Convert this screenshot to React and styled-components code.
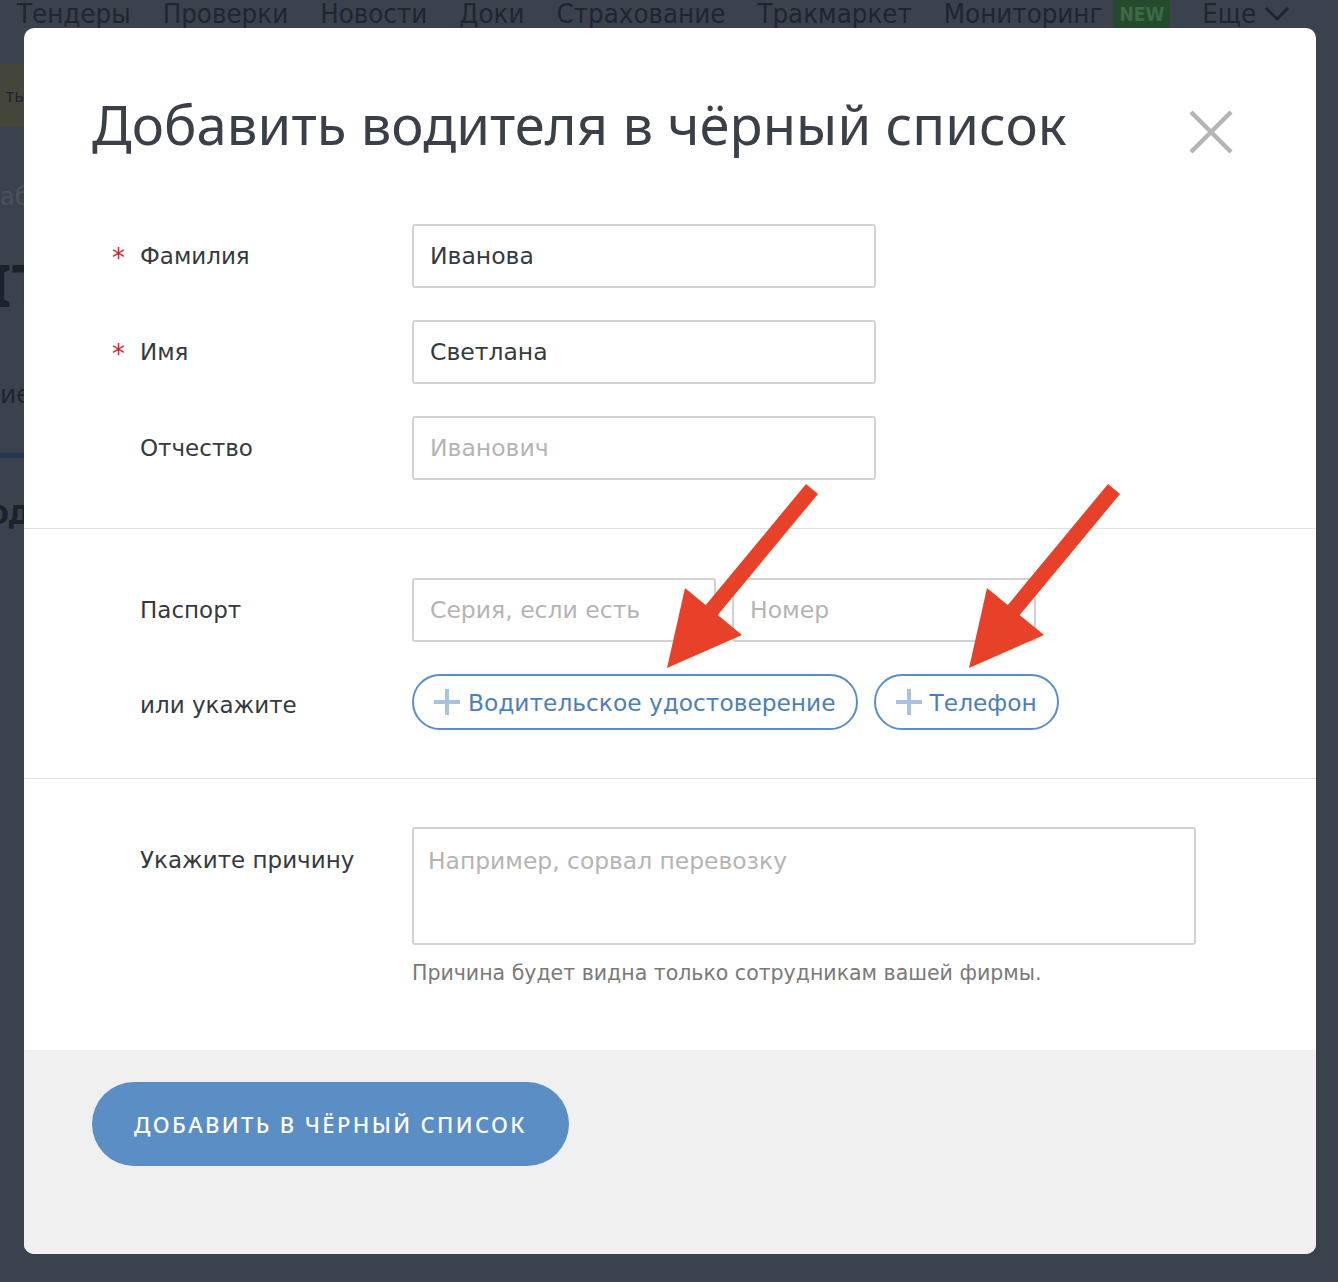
import React from 'react'
import styled, { createGlobalStyle } from 'styled-components'

const GlobalStyle = createGlobalStyle`
  html, body {
    margin: 0;
    padding: 0;
    background: #3a424d;
  }
  body {
    font-family: "DejaVu Sans", Verdana, sans-serif;
  }
  * { box-sizing: border-box; }
`

const nav = ['Тендеры', 'Проверки', 'Новости', 'Доки', 'Страхование', 'Тракмаркет', 'Мониторинг']

export default function App() {
  return (
    <Page>
      <GlobalStyle />
      <NavBar>
        {nav.map((n) => (
          <NavItem key={n}>{n}</NavItem>
        ))}
        <NewBadge>NEW</NewBadge>
        <NavItem>
          Еще
          <svg width="26" height="18" viewBox="0 0 26 18" style={{ marginLeft: 8 }}>
            <path d="M2 3 L13 14 L24 3" fill="none" stroke="#1f2630" strokeWidth="3" />
          </svg>
        </NavItem>
      </NavBar>

      <BgSide>
        <BgButton>ть</BgButton>
        <BgText $top="50px" $light>аб</BgText>
        <BgBig>IT</BgBig>
        <BgText $top="50px">ие</BgText>
        <BgLine />
        <BgBig $small>од</BgBig>
      </BgSide>

      <Overlay>
        <Modal>
          <Header>
            <Title>Добавить водителя в чёрный список</Title>
            <CloseButton aria-label="Закрыть">
              <svg width="46" height="46" viewBox="0 0 46 46">
                <path d="M3 3 L43 43 M43 3 L3 43" stroke="#b5b5b5" strokeWidth="4.5" />
              </svg>
            </CloseButton>
          </Header>

          <Section $top="70px">
            <Row>
              <Label $required>Фамилия</Label>
              <Input defaultValue="Иванова" />
            </Row>
            <Row>
              <Label $required>Имя</Label>
              <Input defaultValue="Светлана" />
            </Row>
            <Row>
              <Label>Отчество</Label>
              <Input placeholder="Иванович" />
            </Row>
          </Section>

          <Section $top="49px">
            <Row>
              <Label>Паспорт</Label>
              <Pair>
                <Input $w="304px" placeholder="Серия, если есть" />
                <Input $w="304px" placeholder="Номер" />
              </Pair>
            </Row>
            <Row>
              <Label $shift="5px">или укажите</Label>
              <Pair>
                <AddButton>
                  <Plus />
                  Водительское удостоверение
                </AddButton>
                <AddButton>
                  <Plus />
                  Телефон
                </AddButton>
              </Pair>
            </Row>
          </Section>

          <Section $top="48px" $last>
            <Row $top>
              <Label $shift="20px">Укажите причину</Label>
              <Field>
                <TextArea placeholder="Например, сорвал перевозку" />
                <Hint>Причина будет видна только сотрудникам вашей фирмы.</Hint>
              </Field>
            </Row>
          </Section>

          <Footer>
            <SubmitButton>Добавить в чёрный список</SubmitButton>
          </Footer>
        </Modal>

        <Arrows viewBox="0 0 1338 1282" width="1338" height="1282">
          <Arrow dx={0} />
          <Arrow dx={302} />
        </Arrows>
      </Overlay>
    </Page>
  )
}

function Plus() {
  return (
    <svg width="30" height="30" viewBox="0 0 30 30" style={{ marginRight: 6 }}>
      <path d="M15 2 V28 M2 15 H28" stroke="#a9c2df" strokeWidth="4" />
    </svg>
  )
}

function Arrow({ dx }) {
  return (
    <g transform={`translate(${dx} 0)`} fill="#e8412a">
      <path d="M806 484 L818 494 L712 622 L700 612 Z" />
      <path d="M667 668 L685 588 L742 635 Z" />
    </g>
  )
}

const Page = styled.div`
  position: relative;
  width: 1338px;
  height: 1282px;
  overflow: hidden;
  background: #3a424d;
`

const NavBar = styled.nav`
  display: flex;
  align-items: center;
  gap: 32px;
  height: 30px;
  padding-left: 17px;
  font-family: "DejaVu Sans Condensed", "DejaVu Sans", sans-serif;
  font-size: 27.4px;
  line-height: 30px;
  color: #1f2630;
  margin-top: -1px;
`

const NavItem = styled.span`
  display: flex;
  align-items: center;
  white-space: nowrap;
`

const NewBadge = styled.span`
  margin-left: -21px;
  padding: 0 6px;
  height: 30px;
  line-height: 30px;
  border-radius: 5px;
  background: #264a2e;
  color: #3e6b47;
  font-size: 19px;
  font-weight: bold;
`

const BgSide = styled.div`
  width: 24px;
  overflow: hidden;
  margin-top: 35px;
  display: flex;
  flex-direction: column;
  font-family: "Noto Sans", sans-serif;
`

const BgButton = styled.div`
  height: 63px;
  background: #44463c;
  color: #1f2630;
  font-size: 18px;
  line-height: 63px;
  text-align: right;
  white-space: nowrap;
`

const BgText = styled.div`
  margin-top: ${(p) => p.$top};
  color: ${(p) => (p.$light ? '#4a525d' : '#1f2630')};
  font-size: 26px;
  white-space: nowrap;
  text-align: right;
`

const BgBig = styled.div`
  margin-top: 30px;
  color: #1c222b;
  font-size: ${(p) => (p.$small ? '34px' : '60px')};
  font-weight: bold;
  white-space: nowrap;
  margin-left: -12px;
`

const BgLine = styled.div`
  margin-top: 42px;
  height: 5px;
  background: #23374f;
`

const Overlay = styled.div`
  position: absolute;
  inset: 0;
  padding: 28px 22px 28px 24px;
`

const Modal = styled.div`
  width: 1292px;
  height: 1226px;
  background: #fff;
  border-radius: 10px;
  overflow: hidden;
  display: flex;
  flex-direction: column;
`

const Header = styled.div`
  display: flex;
  align-items: flex-start;
  justify-content: space-between;
  padding: 62px 82px 0 68px;
  height: 126px;
`

const Title = styled.h1`
  margin: 4px 0 0;
  font-family: "Noto Sans", "Open Sans", sans-serif;
  font-weight: 400;
  font-size: 54.3px;
  line-height: 60px;
  color: #3b4048;
  letter-spacing: 0.1px;
`

const CloseButton = styled.button`
  border: 0;
  background: none;
  padding: 0;
  width: 46px;
  height: 46px;
  margin-top: 19px;
  cursor: pointer;
`

const Section = styled.section`
  display: flex;
  flex-direction: column;
  gap: 32px;
  padding: ${(p) => p.$top} 0 ${(p) => (p.$last ? '0' : '48px')} 0;
  border-bottom: ${(p) => (p.$last ? 'none' : '1px solid #e2e2e2')};
  flex: ${(p) => (p.$last ? '1' : 'none')};
`

const Row = styled.div`
  display: flex;
  align-items: ${(p) => (p.$top ? 'flex-start' : 'center')};
  padding-left: 88px;
`

const Label = styled.div`
  width: 300px;
  padding-left: 28px;
  position: relative;
  font-size: 23px;
  line-height: 26px;
  color: #343a40;
  padding-top: ${(p) => p.$shift || '0'};
  &::before {
    content: ${(p) => (p.$required ? '"*"' : 'none')};
    position: absolute;
    left: 0;
    top: 2px;
    color: #c62a2e;
    font-size: 26px;
    line-height: 26px;
  }
`

const Input = styled.input`
  width: ${(p) => p.$w || '464px'};
  height: 64px;
  border: 2px solid #d2d2d2;
  border-radius: 3px;
  padding: 0 16px;
  font-family: "DejaVu Sans", sans-serif;
  font-size: 23.5px;
  color: #343a40;
  outline: none;
  &::placeholder {
    color: #b4b4b4;
  }
`

const Pair = styled.div`
  display: flex;
  gap: 16px;
`

const AddButton = styled.button`
  display: flex;
  align-items: center;
  height: 56px;
  padding: 0 20px 0 18px;
  border: 2px solid #5b8dc6;
  border-radius: 28px;
  background: #fff;
  color: #4c7fba;
  font-family: "DejaVu Sans", sans-serif;
  font-size: 23.3px;
  cursor: pointer;
`

const Field = styled.div`
  display: flex;
  flex-direction: column;
`

const TextArea = styled.textarea`
  width: 784px;
  height: 118px;
  border: 2px solid #d2d2d2;
  border-radius: 3px;
  padding: 18px 14px;
  resize: none;
  font-family: "DejaVu Sans", sans-serif;
  font-size: 23.4px;
  color: #343a40;
  outline: none;
  &::placeholder {
    color: #b4b4b4;
  }
`

const Hint = styled.div`
  margin-top: 16px;
  font-family: "DejaVu Sans", sans-serif;
  font-size: 20.5px;
  line-height: 24px;
  color: #7a7a7a;
`

const Footer = styled.div`
  height: 204px;
  background: #f0f0f0;
  padding: 32px 0 0 68px;
`

const SubmitButton = styled.button`
  width: 477px;
  height: 84px;
  border: 0;
  border-radius: 42px;
  background: #5a8ec5;
  color: #fff;
  font-family: "Noto Sans", "Open Sans", sans-serif;
  font-size: 22px;
  font-weight: 500;
  letter-spacing: 2.4px;
  text-transform: uppercase;
  cursor: pointer;
`

const Arrows = styled.svg`
  position: absolute;
  left: 0;
  top: 0;
  pointer-events: none;
`
